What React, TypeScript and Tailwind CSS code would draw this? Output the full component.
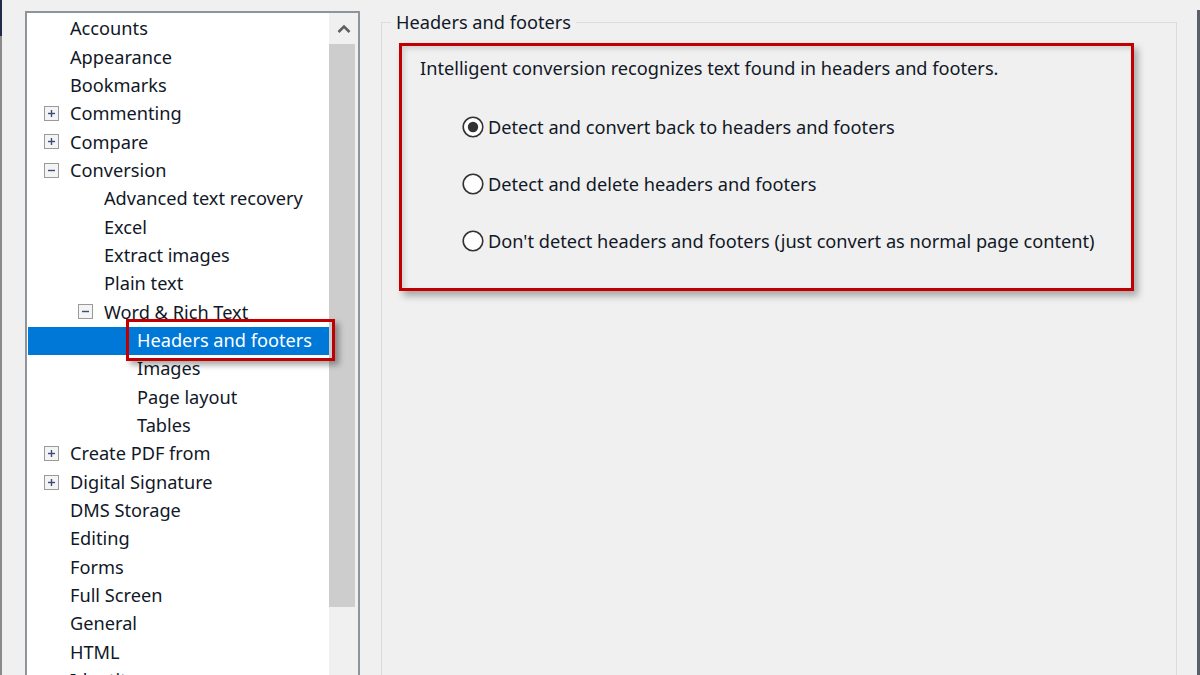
import React from "react";

type Item = { label: string; level: number; toggle?: "plus" | "minus"; selected?: boolean };

const items: Item[] = [
  { label: "Accounts", level: 0 },
  { label: "Appearance", level: 0 },
  { label: "Bookmarks", level: 0 },
  { label: "Commenting", level: 0, toggle: "plus" },
  { label: "Compare", level: 0, toggle: "plus" },
  { label: "Conversion", level: 0, toggle: "minus" },
  { label: "Advanced text recovery", level: 1 },
  { label: "Excel", level: 1 },
  { label: "Extract images", level: 1 },
  { label: "Plain text", level: 1 },
  { label: "Word & Rich Text", level: 1, toggle: "minus" },
  { label: "Headers and footers", level: 2, selected: true },
  { label: "Images", level: 2 },
  { label: "Page layout", level: 2 },
  { label: "Tables", level: 2 },
  { label: "Create PDF from", level: 0, toggle: "plus" },
  { label: "Digital Signature", level: 0, toggle: "plus" },
  { label: "DMS Storage", level: 0 },
  { label: "Editing", level: 0 },
  { label: "Forms", level: 0 },
  { label: "Full Screen", level: 0 },
  { label: "General", level: 0 },
  { label: "HTML", level: 0 },
  { label: "Identity", level: 0 },
];

function ToggleBox({ kind }: { kind: "plus" | "minus" }) {
  return (
    <svg width="15" height="15" viewBox="0 0 15 15" className="shrink-0">
      <rect x="0.5" y="0.5" width="14" height="14" fill="#f4f4f4" stroke="#9a9a9a" />
      <line x1="4" y1="7.5" x2="11" y2="7.5" stroke="#3c4a7a" strokeWidth="1.4" />
      {kind === "plus" && <line x1="7.5" y1="4" x2="7.5" y2="11" stroke="#3c4a7a" strokeWidth="1.4" />}
    </svg>
  );
}

function TreeRow({ item }: { item: Item }) {
  const textPad = item.level === 0 ? "pl-[43px]" : item.level === 1 ? "pl-[77px]" : "pl-[110px]";
  const togglePad = item.level === 0 ? "left-[17px]" : "left-[51px]";
  return (
    <div className="relative h-[28.35px] flex items-center">
      {item.selected && (
        <div className="absolute left-[1px] right-0 top-[1px] bottom-[-1px] bg-[#0078d7]" />
      )}
      {item.toggle && (
        <div className={`absolute ${togglePad} top-[7px]`}>
          <ToggleBox kind={item.toggle} />
        </div>
      )}
      <span
        className={`relative whitespace-nowrap ${textPad} ${item.selected ? "text-white" : "text-[#111827]"}`}
      >
        {item.label}
      </span>
      {item.selected && (
        <div className="absolute left-[99px] top-[-7px] w-[209px] h-[42px] border-[3px] border-[#c00000] shadow-[4px_4px_6px_rgba(0,0,0,0.35)]" />
      )}
    </div>
  );
}

function Radio({ checked, label }: { checked?: boolean; label: string }) {
  return (
    <div className="flex items-center h-[22px]">
      <svg width="22" height="22" viewBox="0 0 22 22" className="shrink-0">
        <circle cx="11" cy="11" r="9.8" fill="#ffffff" stroke="#333333" strokeWidth="1.6" />
        {checked && <circle cx="11" cy="11" r="5.2" fill="#333333" />}
      </svg>
      <span className="ml-[4px] whitespace-nowrap text-[#111827]">{label}</span>
    </div>
  );
}

export default function App() {
  return (
    <div
      className="w-[1200px] h-[675px] overflow-hidden bg-[#f0f0f0] flex text-[18.2px] leading-[22px]"
      style={{ fontFamily: '"Noto Sans", "Open Sans", Arial, sans-serif' }}
    >
      {/* left edge strip */}
      <div className="w-[2px] shrink-0 flex flex-col">
        <div className="h-[36px] bg-[#1f2a4d]" />
        <div className="flex-1 bg-[#8a8a8a]" />
      </div>

      {/* tree view */}
      <div className="ml-[23px] mt-[11px] w-[335px] h-[700px] shrink-0 border-2 border-[#8f939a] bg-white flex">
        <div className="flex-1 pt-[1px]">
          {items.map((it) => (
            <TreeRow key={it.label} item={it} />
          ))}
        </div>
        <div className="w-[29px] shrink-0 bg-[#f0f0f0] flex flex-col">
          <div className="h-[31px] flex items-center justify-center">
            <svg width="14" height="10" viewBox="0 0 14 10">
              <path d="M1.5 8 L7 2.5 L12.5 8" fill="none" stroke="#606060" strokeWidth="2.6" />
            </svg>
          </div>
          <div className="h-[563px] w-[26px] bg-[#cdcdcd]" />
        </div>
      </div>

      {/* group box */}
      <fieldset className="ml-[21px] mt-[10px] w-[796px] h-[700px] shrink-0 border border-[#dcdcdc] px-0">
        <legend className="ml-[9px] px-[5px] text-[#111827] leading-[24px]">Headers and footers</legend>
        <div className="ml-[17px] mt-[9px] w-[735px] h-[248px] border-[3px] border-[#c00000] shadow-[4px_5px_7px_rgba(0,0,0,0.3),inset_3px_3px_5px_rgba(0,0,0,0.12)] pl-[18px] pt-[11px]">
          <div className="text-[#111827]">Intelligent conversion recognizes text found in headers and footers.</div>
          <div className="mt-[37px] ml-[42px] flex flex-col gap-[35px]">
            <Radio checked label="Detect and convert back to headers and footers" />
            <Radio label="Detect and delete headers and footers" />
            <Radio label="Don't detect headers and footers (just convert as normal page content)" />
          </div>
        </div>
      </fieldset>

      {/* right edge */}
      <div className="ml-auto w-[3px] shrink-0 flex flex-col">
        <div className="h-[10px]" />
        <div className="flex-1 bg-[#5a5f6a]" />
      </div>
    </div>
  );
}
